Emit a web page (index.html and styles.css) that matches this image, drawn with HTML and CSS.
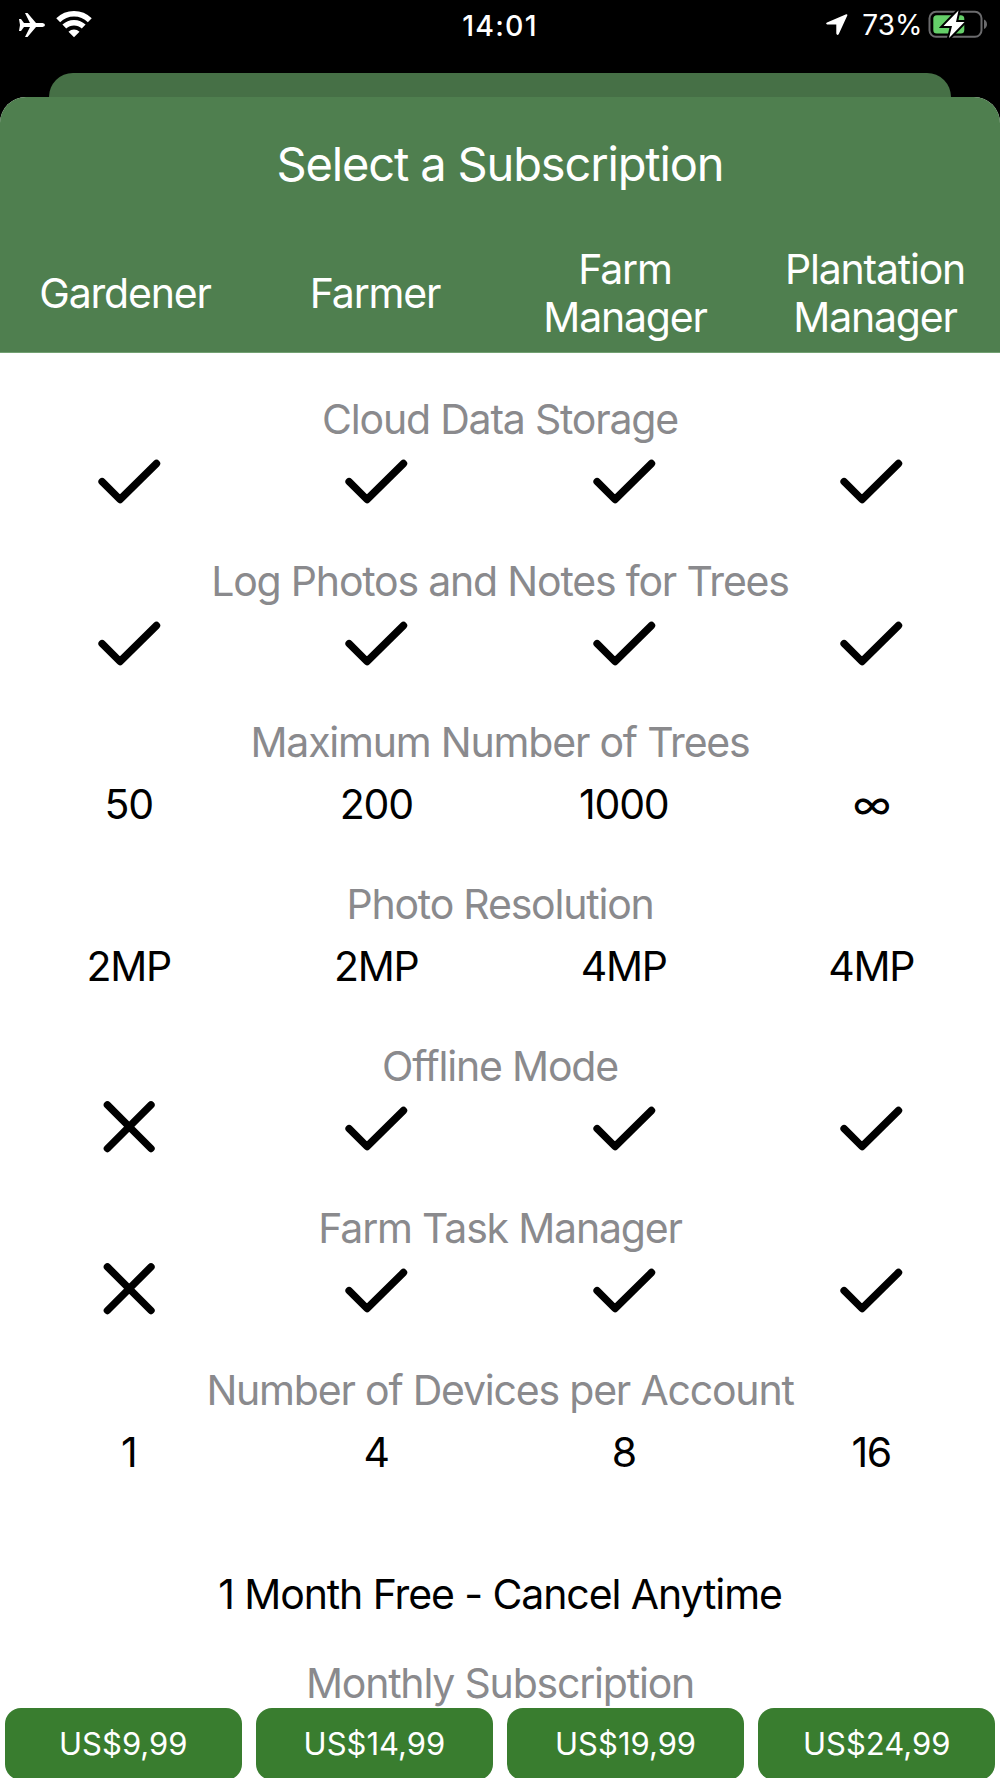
FILE: index.html
```html
<!doctype html>
<html lang="en">
  <head>
    <meta charset="utf-8">
    <title>Select a Subscription</title>
    <meta name="viewport" content="width=device-width, initial-scale=1.0">
    <link rel="stylesheet" href="styles.css">
  </head>
  <body>
    <svg width="0" height="0" class="sprite">
      <symbol id="check" viewBox="0 0 64 56">
        <path d="M5.1 28.7 23 46.5 59.5 10.5" />
      </symbol>
      <symbol id="cross" viewBox="0 0 64 56">
        <path d="M10.4 4.9 54 48.5M54 4.9 10.4 48.5" />
      </symbol>
    </svg>

    <div class="status-bar">
      <div class="status-left">
        <svg class="plane" width="26" height="24" viewBox="0 0 26 24">
          <path d="M0 6h2l3 4h6L6 0h2.500l8.500 10h6.500q2.500 .3 2.500 2t-2.500 2H17L8.500 24H6l5-10H5l-3 4H0l1-6z" />
        </svg>
        <svg class="wifi" width="38" height="28" viewBox="0 0 38 28">
          <path class="arc" d="M3.200 10.200a22.500 22.500 0 0 1 31.600 0M9.300 16.600a14 14 0 0 1 19.400 0" />
          <path d="M13.500 21.800a8 8 0 0 1 11 0L19 27.300z" />
        </svg>
      </div>
      <time>14:01</time>
      <div class="status-right">
        <svg class="location" width="22" height="22" viewBox="0 0 22 22">
          <path d="M20.200 .3 1 8.500Q-.8 9.800 1.200 10.500H10.300V19.500Q11 22 12.700 20.200L21.300 1.600Q21.700 .1 20.200 .3z" />
        </svg>
        <span class="percent">73%</span>
        <svg class="battery" width="60" height="30" viewBox="0 0 60 30">
          <rect class="shell" x="1.500" y="1.800" width="52" height="25" rx="6.500" />
          <path class="cap" d="M56 9.500q3 1.500 3 4.800T56 19z" />
          <rect class="level" x="5.300" y="5.200" width="31" height="18.300" rx="3.500" />
          <path class="bolt" d="M30.500 .5 15.500 16h8.500L21 28 36.500 12h-8.500z" />
        </svg>
      </div>
    </div>

    <div class="sheet-behind"></div>

    <main class="sheet">
      <header>
        <h1>Select a Subscription</h1>
        <div class="plans">
          <div>Gardener</div>
          <div>Farmer</div>
          <div>Farm<br>Manager</div>
          <div>Plantation<br>Manager</div>
        </div>
      </header>

      <div class="features">
        <section>
          <h2>Cloud Data Storage</h2>
          <div class="values">
            <svg><use href="#check" /></svg>
            <svg><use href="#check" /></svg>
            <svg><use href="#check" /></svg>
            <svg><use href="#check" /></svg>
          </div>
        </section>

        <section>
          <h2>Log Photos and Notes for Trees</h2>
          <div class="values">
            <svg><use href="#check" /></svg>
            <svg><use href="#check" /></svg>
            <svg><use href="#check" /></svg>
            <svg><use href="#check" /></svg>
          </div>
        </section>

        <section>
          <h2>Maximum Number of Trees</h2>
          <div class="values">
            <span>50</span>
            <span>200</span>
            <span>1000</span>
            <span>∞</span>
          </div>
        </section>

        <section>
          <h2>Photo Resolution</h2>
          <div class="values">
            <span>2MP</span>
            <span>2MP</span>
            <span>4MP</span>
            <span>4MP</span>
          </div>
        </section>

        <section>
          <h2>Offline Mode</h2>
          <div class="values">
            <svg><use href="#cross" /></svg>
            <svg><use href="#check" /></svg>
            <svg><use href="#check" /></svg>
            <svg><use href="#check" /></svg>
          </div>
        </section>

        <section>
          <h2>Farm Task Manager</h2>
          <div class="values">
            <svg><use href="#cross" /></svg>
            <svg><use href="#check" /></svg>
            <svg><use href="#check" /></svg>
            <svg><use href="#check" /></svg>
          </div>
        </section>

        <section>
          <h2>Number of Devices per Account</h2>
          <div class="values">
            <span>1</span>
            <span>4</span>
            <span>8</span>
            <span>16</span>
          </div>
        </section>
      </div>

      <p class="trial">1 Month Free - Cancel Anytime</p>

      <h2>Monthly Subscription</h2>
      <div class="prices">
        <button>US$9,99</button>
        <button>US$14,99</button>
        <button>US$19,99</button>
        <button>US$24,99</button>
      </div>
    </main>
  </body>
</html>
```

FILE: styles.css
```css
:root {
  --header: #4f7f4f;
  --header-dim: #467046;
  --button: #397d2f;
  --gray: #8a8a8d;
}

* {
  box-sizing: border-box;
}

body {
  margin: 0;
  height: 1778px;
  overflow: hidden;
  background: #000;
  color: #000;
  font-family: Inter, "Liberation Sans", sans-serif;
  font-size: 41px;
  letter-spacing: -1.2px;
}

h1,
h2,
p {
  margin: 0;
  font-weight: 400;
  text-align: center;
  white-space: nowrap;
}

.sprite {
  position: absolute;
}

.status-bar {
  display: grid;
  grid-template-columns: 1fr auto 1fr;
  align-items: center;
  height: 50px;
  color: #fff;
}

.status-bar svg {
  fill: #fff;
}

.status-left,
.status-right {
  display: flex;
  align-items: center;
}

.status-left {
  gap: 10px;
  padding-left: 18.5px;
}

.status-right {
  justify-content: flex-end;
  padding-right: 12.5px;
}

.wifi {
  margin-top: -3px;
}

.wifi .arc {
  fill: none;
  stroke: #fff;
  stroke-width: 5.5;
}

time {
  font-size: 28.5px;
  font-weight: 500;
  letter-spacing: 1.2px;
}

.percent {
  margin: 0 5px 0 14px;
  font-size: 28px;
  letter-spacing: 0;
}

.battery .shell {
  fill: none;
  stroke: #6b6b6d;
  stroke-width: 2;
}

.battery .cap {
  fill: #6b6b6d;
}

.battery .level {
  fill: #65cf69;
}

.battery .bolt {
  stroke: #000;
  stroke-width: 4;
  paint-order: stroke;
}

.sheet-behind {
  height: 25px;
  margin: 22.5px 49px 0 48.5px;
  border-radius: 24px 24px 0 0;
  background: var(--header-dim);
}

.sheet {
  height: 1700px;
  margin-top: -0.5px;
  border-radius: 26px 26px 0 0;
  background: #fff;
  overflow: hidden;
}

header {
  height: 256px;
  padding-top: 38px;
  border-bottom: 1px solid #72a072;
  background: var(--header);
  color: #fff;
}

h1 {
  font-size: 47px;
  letter-spacing: -1.15px;
  line-height: 58px;
}

.plans {
  display: grid;
  grid-template-columns: repeat(4, 1fr);
  align-items: center;
  height: 97px;
  margin-top: 51.5px;
  line-height: 48px;
  text-align: center;
}

.features {
  padding: 40.7px 5px 0;
}

section {
  height: 161.9px;
}

h2 {
  color: var(--gray);
  font-size: 41px;
  line-height: 50px;
}

.values {
  display: grid;
  grid-template-columns: repeat(4, 1fr);
  place-items: center;
  height: 74px;
}

.values svg {
  width: 64px;
  height: 56px;
  fill: none;
  stroke: #000;
  stroke-width: 7.4;
  stroke-linecap: round;
  stroke-linejoin: round;
}

.trial {
  margin: 41.8px 0 38.8px;
  letter-spacing: -1.1px;
  line-height: 50px;
}

.prices {
  display: grid;
  grid-template-columns: repeat(4, 1fr);
  gap: 14.6px;
  margin: 0 5px;
}

button {
  height: 72px;
  padding: 0;
  border: 0;
  border-radius: 16px;
  background: var(--button);
  color: #fff;
  font: 31px Inter, "Liberation Sans", sans-serif;
  letter-spacing: 0;
}
```
